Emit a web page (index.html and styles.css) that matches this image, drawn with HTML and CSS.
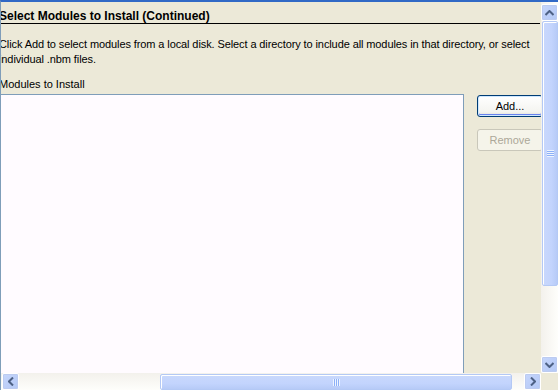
FILE: index.html
```html
<!DOCTYPE html>
<html lang="en">
<head>
<meta charset="UTF-8" />
<title>Select Modules to Install</title>
<link rel="stylesheet" href="styles.css">
</head>
<body>

<div class="frame">
  <div class="pane">
    <div class="content">
      <h1 class="title">Select Modules to Install (Continued)</h1>
      <p class="desc">Click Add to select modules from a local disk. Select a directory to include all modules in that directory, or select individual .nbm files.</p>
      <div class="label">Modules to Install</div>
      <div class="list-row">
        <div class="list"></div>
        <div class="buttons">
          <button class="btn btn-default">Add...</button>
          <button class="btn" disabled>Remove</button>
        </div>
      </div>
    </div>
  </div>

  <div class="vscroll">
    <div class="arrow arrow-up">
      <svg width="9" height="6" viewBox="0 0 9 6"><path d="M0.5 5 L4.5 1 L8.5 5" fill="none" stroke="#4d6185" stroke-width="2"/></svg>
    </div>
    <div class="vtrack">
      <div class="vthumb"><span class="grip-h"></span></div>
    </div>
    <div class="arrow arrow-down">
      <svg width="9" height="6" viewBox="0 0 9 6"><path d="M0.5 1 L4.5 5 L8.5 1" fill="none" stroke="#4d6185" stroke-width="2"/></svg>
    </div>
  </div>

  <div class="hscroll">
    <div class="arrow arrow-left">
      <svg width="6" height="9" viewBox="0 0 6 9"><path d="M5 0.5 L1 4.5 L5 8.5" fill="none" stroke="#4d6185" stroke-width="2"/></svg>
    </div>
    <div class="htrack">
      <div class="hthumb"><span class="grip-v"></span></div>
    </div>
    <div class="arrow arrow-right">
      <svg width="6" height="9" viewBox="0 0 6 9"><path d="M1 0.5 L5 4.5 L1 8.5" fill="none" stroke="#4d6185" stroke-width="2"/></svg>
    </div>
  </div>

  <div class="corner"></div>
</div>

</body>
</html>
```

FILE: styles.css
```css
body {
  margin: 0;
  padding: 0;
  background: #ece9d8;
  font-family: Tahoma, "Liberation Sans", "DejaVu Sans", sans-serif;
  font-size: 11px;
  color: #000;
  overflow: hidden;
}
.frame {
  width: 557px;
  height: 388px;
  border-top: 2px solid #3169c6;
  border-left: 1px solid #7f9db9;
  display: grid;
  grid-template-columns: 540px 17px;
  grid-template-rows: 371px 17px;
  background: #ece9d8;
}
.pane {
  overflow: hidden;
  position: relative;
}
.content {
  margin-left: -3px;
  width: 570px;
}
.title {
  margin: 0;
  padding-top: 8px;
  height: 13px;
  font-size: 12px;
  font-weight: bold;
  line-height: 13px;
  border-bottom: 1px solid #000;
  width: 541px;
  padding-left: 1px;
}
.desc {
  margin: 0;
  padding: 13px 0 0 1px;
  line-height: 15px;
  width: 538px;
  letter-spacing: -0.1px;
}
.label {
  padding: 11px 0 0 1px;
  line-height: 13px;
  height: 13px;
}
.list-row {
  display: flex;
  margin-top: 3px;
  gap: 13px;
}
.list {
  flex: none;
  width: 462px;
  height: 290px;
  margin-left: 2px;
  background: #fffbff;
  border: 1px solid #7f9db9;
}
.buttons {
  display: flex;
  flex-direction: column;
  gap: 12px;
  padding-top: 1px;
}
.btn {
  width: 66px;
  height: 22px;
  font-family: inherit;
  font-size: 11px;
  border: 1px solid #003c74;
  border-radius: 3px;
  background: linear-gradient(#ffffff, #f4f4f0 80%, #dcdbd3);
  color: #000;
  padding: 0;
}
.btn-default {
  box-shadow: inset 0 0 0 1px #cee7ff, inset 0 -1px 0 1px #6982ee;
}
.btn:disabled {
  border-color: #c9c7ba;
  background: #f5f4ea;
  color: #aca899;
  box-shadow: none;
}
/* barre di scorrimento stile XP */
.vscroll {
  display: flex;
  flex-direction: column;
  background: linear-gradient(90deg, #f3f1ec, #fefefb);
  padding-top: 2px;
}
.hscroll {
  display: flex;
  background: linear-gradient(#f3f1ec, #fefefb);
  padding-left: 1px;
}
.corner {
  background: #ece9d8;
}
.arrow {
  width: 15px;
  height: 15px;
  border: 1px solid #fff;
  border-radius: 2px;
  background: linear-gradient(135deg, #c6d6fc, #b3c8f5);
  box-shadow: inset 0 0 0 1px #bccbf0;
  display: flex;
  align-items: center;
  justify-content: center;
  flex: none;
}
.vtrack {
  flex: 1;
  display: flex;
  flex-direction: column;
  padding-bottom: 70px;
}
.vthumb {
  flex: 1;
  margin: 0 0 0 1px;
  width: 14px;
  border: 1px solid #b4c9f5;
  border-radius: 2px;
  background: linear-gradient(90deg, #c9d8fc, #c3d4fd 60%, #b7cbf7);
  box-shadow: inset 1px 1px 0 #fff;
  display: flex;
  align-items: center;
  justify-content: center;
}
.htrack {
  flex: 1;
  display: flex;
  padding-left: 141px;
  padding-right: 12px;
}
.hthumb {
  flex: 1;
  height: 14px;
  margin-top: 1px;
  border: 1px solid #b4c9f5;
  border-radius: 2px;
  background: linear-gradient(#c9d8fc, #c3d4fd 60%, #b7cbf7);
  box-shadow: inset 1px 1px 0 #fff;
  display: flex;
  align-items: center;
  justify-content: center;
}
.grip-h {
  width: 7px;
  height: 7px;
  background: repeating-linear-gradient(#eef4fe 0 1px, #8cb0f8 1px 2px);
}
.grip-v {
  width: 7px;
  height: 7px;
  background: repeating-linear-gradient(90deg, #eef4fe 0 1px, #8cb0f8 1px 2px);
}
```
